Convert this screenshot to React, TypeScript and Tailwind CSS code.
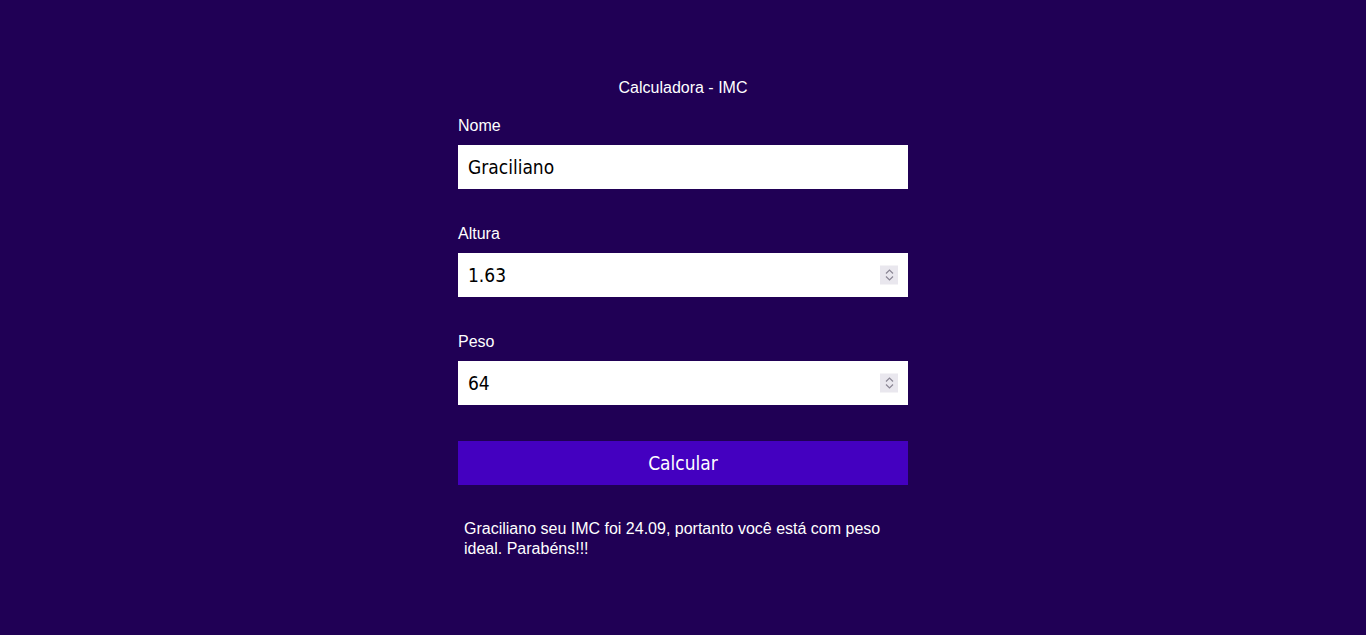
import React, { useState } from 'react';

const Spinner: React.FC = () => (
  <div className="absolute right-[10px] top-1/2 -translate-y-1/2 w-[18px] h-[19px] bg-[#e9e7ee] flex flex-col items-center justify-center gap-[1px]">
    <svg width="9" height="6" viewBox="0 0 9 6" fill="none">
      <path d="M1 5 L4.5 1.5 L8 5" stroke="#8a8694" strokeWidth="1.2" />
    </svg>
    <svg width="9" height="6" viewBox="0 0 9 6" fill="none">
      <path d="M1 1 L4.5 4.5 L8 1" stroke="#8a8694" strokeWidth="1.2" />
    </svg>
  </div>
);

const Field: React.FC<{ label: string; value: string; numeric?: boolean }> = ({ label, value, numeric }) => (
  <div className="flex flex-col">
    <label className="text-white text-[16px] leading-[18px] mb-[10px]">{label}</label>
    <div className="relative">
      <input
        readOnly
        value={value}
        className="w-full h-[44px] bg-white text-black pl-[10px] text-[19px] outline-none font-['DejaVu_Sans_Condensed',sans-serif]"
      />
      {numeric && <Spinner />}
    </div>
  </div>
);

const App: React.FC = () => {
  const [nome] = useState('Graciliano');

  return (
    <div className="min-h-[635px] bg-[#200055] font-['Liberation_Sans',Arial,sans-serif]">
      <div className="w-[450px] mx-auto pt-[79px]">
        <h1 className="text-white text-center text-[16px] leading-[18px] mb-[20px]">Calculadora - IMC</h1>
        <div className="flex flex-col gap-[36px]">
          <Field label="Nome" value={nome} />
          <Field label="Altura" value="1.63" numeric />
          <Field label="Peso" value="64" numeric />
        </div>
        <button className="mt-[36px] w-full h-[44px] bg-[#4400c0] text-white text-[19px] font-['DejaVu_Sans_Condensed',sans-serif]">
          Calcular
        </button>
        <p className="mt-[34px] px-[6px] text-white text-[16px] leading-[20px]">
          {nome} seu IMC foi 24.09, portanto você está com peso ideal. Parabéns!!!
        </p>
      </div>
    </div>
  );
};

export default App;
